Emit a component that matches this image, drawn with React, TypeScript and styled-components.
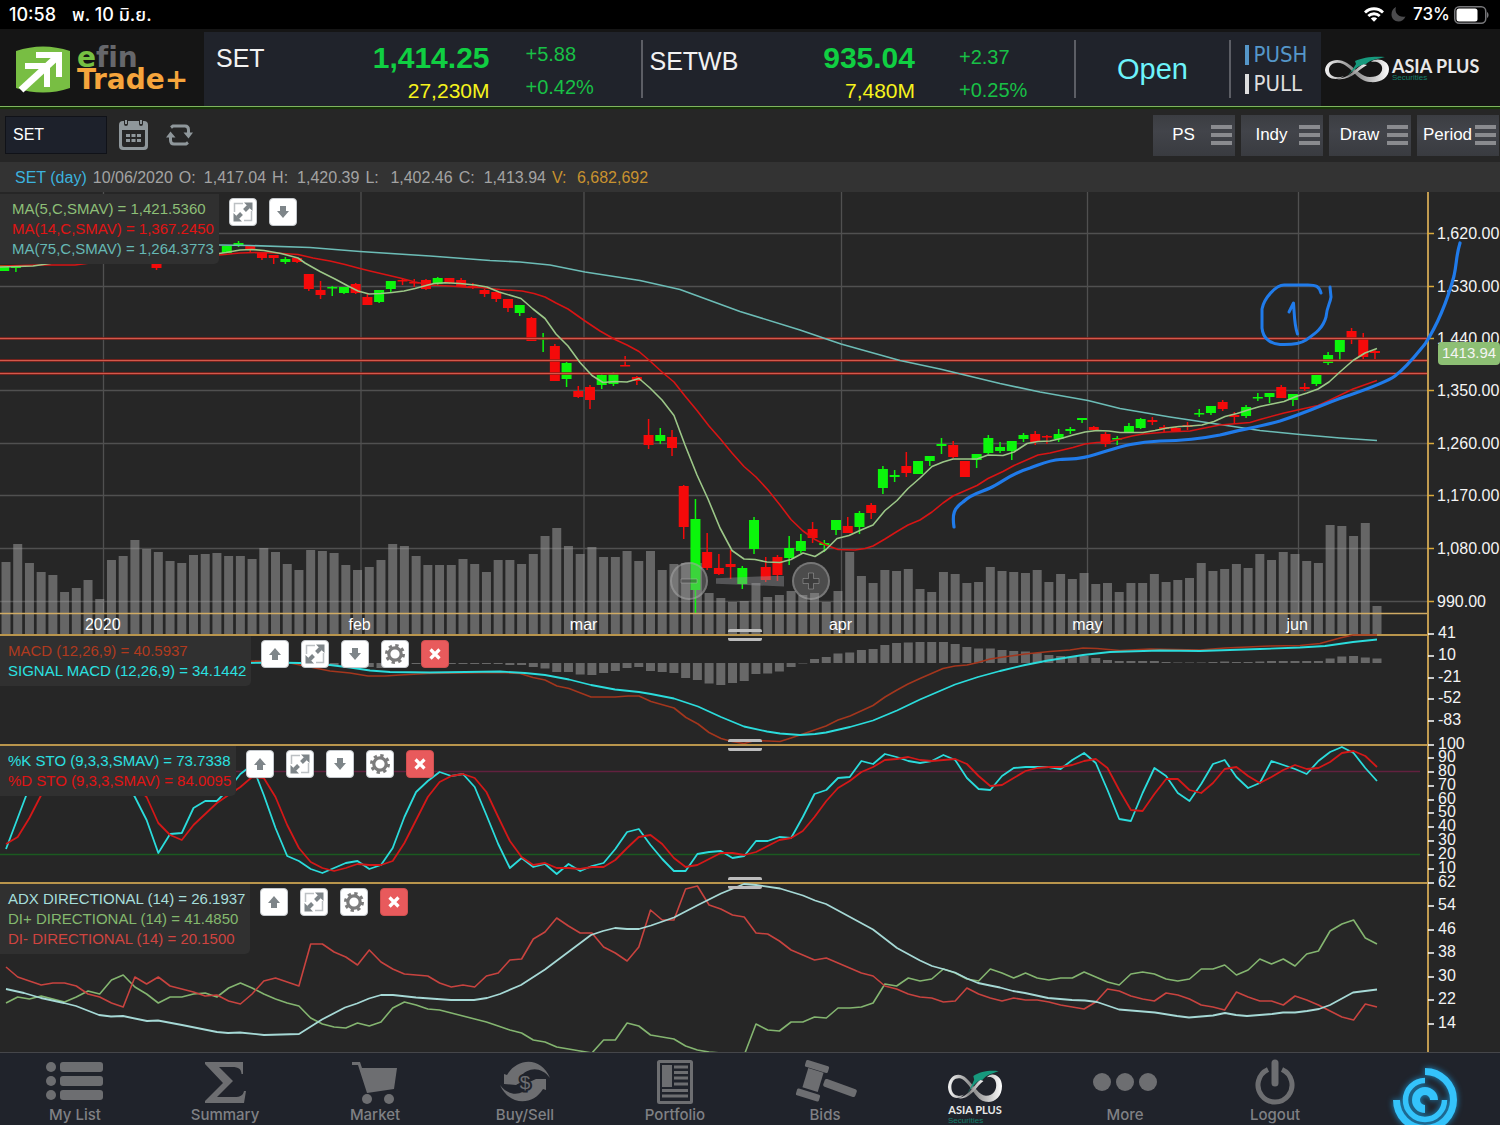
import React from "react";
import styled, { createGlobalStyle } from "styled-components";

const sans = `"Liberation Sans", Arial, sans-serif`;
const ui = `Inter, "Noto Sans Thai", "Noto Sans", sans-serif`;

const Global = createGlobalStyle`
  * { box-sizing: border-box; }
  body { margin: 0; background: #262626; font-family: ${sans}; color: #fff; }
  button { font: inherit; color: inherit; border: 0; padding: 0; background: none; cursor: pointer; }
`;

/* ---------- data ---------- */

const STEP = 11.718;
const nums = (s: string) => s.trim().split(/\s+/).map(Number);
const barX = (i: number) => 6 + i * STEP;
const candleX = (i: number) => 4.2 + i * 11.716;
const series = (s: string) => nums(s).map((y, i) => `${barX(i).toFixed(1)},${y}`).join(" ");

const volume = nums(`
562 544 563 572 575 592 588 580 599 560 556 540 549 552 561 563 555 554 553 556 556 559 548 552 564 570 550 551 553 565
570 567 560 544 546 556 565 565 565 559 564 572 560 560 564 554 536 528 546 554 547 557 557 551 561 551 570 564 563 563
593 598 602 601 583 597 595 591 595 593 602 591 552 576 583 570 571 569 589 592 572 574 583 582 567 571 572 573 570 582
574 579 573 584 583 592 583 583 574 582 580 578 563 571 569 564 568 554 560 552 554 561 563 525 526 536 523 606`);

/* index, direction, body top, body bottom, high, low */
const candles = `
0 g 265 271 265 271;1 g 266 268 266 272;13 r 264 268 264 270;19 g 246 253 246 253;20 g 243 245 241 247;21 r 245 249 245 252;
22 r 252 258 252 260;23 r 255 258 255 264;24 g 259 262 257 264;25 r 258 262 258 263;26 r 274 289 274 291;27 r 290 295 281 299;
28 g 287 288 286 296;29 g 287 293 287 294;30 r 284 293 283 294;31 r 297 305 294 305;32 g 290 302 290 303;33 g 281 289 281 293;
34 r 280 281 278 285;35 r 282 283 279 287;36 r 280 289 279 290;37 g 278 284 277 286;38 r 278 283 278 284;39 r 280 287 278 287;
40 r 286 287 283 289;41 r 290 294 289 297;42 r 292 299 292 302;43 r 299 308 299 312;44 g 305 313 305 316;45 r 318 341 317 341;
46 g 338 339 333 352;47 r 346 381 344 381;48 g 363 379 362 387;49 r 391 397 386 398;50 r 387 400 385 409;51 g 375 385 373 389;
52 g 374 384 372 386;53 r 365 366 356 366;54 r 377 381 376 385;55 r 435 445 419 449;56 g 435 441 428 444;57 r 437 448 430 456;
58 r 486 527 485 539;59 g 519 590 499 613;60 r 552 568 533 570;61 r 568 574 554 575;62 r 564 567 550 579;63 g 568 584 566 589;
64 g 520 549 517 554;65 r 567 580 557 582;66 r 557 575 555 581;67 g 548 558 536 565;68 g 541 551 534 553;69 r 529 538 522 543;
70 g 543 545 540 552;71 g 520 530 520 535;72 r 526 533 517 533;73 g 513 527 511 534;74 r 505 513 503 519;75 g 469 488 466 494;
76 g 475 477 470 482;77 r 466 473 452 477;78 g 461 474 461 474;79 g 456 461 456 466;80 g 444 446 438 454;81 r 445 457 441 458;
82 r 461 477 461 477;83 g 454 460 454 468;84 g 438 453 435 454;85 g 447 451 442 453;86 g 441 451 441 460;87 g 435 439 433 442;
88 r 434 442 431 445;89 r 436 437 435 444;90 g 434 439 429 442;91 g 429 431 427 434;92 g 418 420 418 423;93 r 427 430 426 431;
94 r 434 444 432 447;95 g 438 439 436 445;96 g 426 432 423 433;97 g 419 428 418 429;98 r 420 422 417 425;99 r 427 429 425 432;
100 r 428 431 427 432;101 r 425 427 422 430;102 g 413 414 409 417;103 g 406 413 406 415;104 r 402 409 400 411;105 r 415 417 412 424;
106 g 407 416 405 418;107 g 397 398 393 401;108 g 393 397 393 403;109 r 387 398 385 398;110 g 394 400 394 406;111 r 387 389 383 391;
112 g 375 384 375 386;113 g 355 363 352 365;114 g 340 352 340 360;115 r 331 339 328 344;116 r 339 357 333 359;117 r 351 353 350 359`
  .trim()
  .split(";")
  .map((row) => {
    const [i, dir, ...v] = row.trim().split(" ");
    const [top, bottom, high, low] = v.map(Number);
    return { i: Number(i), dir, top, bottom, high, low };
  });

const ma5 =
  "0,267 33,266 60,262 120,259 180,258 219,253.5 226,252.5 240,250 252,249.5 264,250.5 281,253.5 298,258 305,263 320,271.5 335,279 348,286 358,291 369,294 381,293.5 392,292.5 404,291 415,288.5 428,285 434,283.5 445,282.7 460,283.5 475,285 487,287 499,292 521,298.5 533,309 545,318.5 556,334 568,346 580,362.5 592,375.5 603,382.5 615,381.5 627,382 639,378.5 650,388 662,400 674,415.5 685,445 697,475 708,499 720,528 732,550.5 744,559 755,559.5 767,562 780,562.5 791,559.5 803,553 815,556.5 826,549.5 837,538.5 849,535.5 861,530 873,525 885,510.5 897,500.5 908,488.5 920,478 932,466.5 943,462 953,459 977,459 988,455 1003,455.5 1014,452 1027,443.5 1038,441.5 1050,441 1061,438.5 1073,435 1085,432 1097,430.5 1109,431 1120,432.5 1143,432.5 1155,430.5 1167,428 1179,426.5 1190,426 1202,425 1214,421.5 1225,416.5 1237,413.5 1248,410 1260,406.5 1272,404 1284,401.5 1296,396.5 1307,393 1318,389 1329,382 1341,371 1353,360.5 1365,353 1377,348.5";
const ma14 =
  "0,266 40,265 75,265 90,263 219,255 240,253 258,252.5 275,253 298,254.5 313,258 330,261 345,264.5 358,268 370,271 385,274.5 400,278 415,282 430,285 450,286 470,287.5 480,287.5 500,289.5 522,291 534,293.5 545,297 556,303 568,309 585,321 600,331 615,339.5 627,345 639,351.5 650,361 662,372 674,382 685,396 697,410.5 709,426 720,438.5 732,453 744,466.5 756,477 768,490 780,505 791,519.5 803,531 815,539.5 826,545 838,549.5 855,550 865,548.5 873,546 885,539 897,531.5 908,525 920,520 932,512 943,503 953,496 977,485.5 988,478.5 1003,471.5 1014,465.5 1038,455 1050,453 1073,447.5 1085,444 1097,442.5 1109,442 1120,439 1132,436 1143,434 1167,432 1190,431 1202,428.5 1220,425 1250,422.5 1260,419.5 1284,413 1318,405.5 1329,400.5 1353,389 1377,380.5";
const ma75 =
  "180,244 219,245 250,245.5 310,247.5 360,251.5 430,256 490,260.5 520,262 550,265 585,272 640,280.5 680,289.5 740,311.5 800,330 841,344 900,360.5 940,369 1000,383.5 1040,392 1088,400.5 1120,408.5 1170,417 1220,424.5 1260,430.5 1300,434.5 1340,438 1377,440.5";

const histogram = nums(`
665 666 668 667 668 666 665 664 664 664 664 664 664 664 664 665 665 667 668.5 672 672 674.5 675 673 671 668 667 671 672 673
678 680 683.5 685 683 681 674 673.5 671.5 667 663.5 659 657 653.5 652.5 650 649 645 643 642.5 642 642 642 644 647 648.5
648.5 650 651 651.5 653 655 656 657 656 658 660 661 661 661 661 662 662.5 662.5 662.5 662 661.5 662 662 661.5 661 661 661
661 661 658.5 656.5 656 657.5 658.5`);
const HIST_START = 28;
const HIST_ZERO = 663;

const macdLine =
  "200,659 246,661 270,661.5 290,663 310,667 330,671 350,673 368,676 385,676 400,675 428,673.5 500,672.5 520,673.5 533,677.5 545,680 557,686 569,688.5 591,697 615,697 628,696 639,696 651,701.5 674,708 686,717.5 698,724 709,732.5 721,738.5 732,741.5 744,743.5 755,740.5 780,741.5 791,738 803,734 826,726 838,720 850,716 873,705.5 885,697 897,690 908,684 920,678.5 943,668.5 955,666 967,665 978,662.5 990,659 1000,657.5 1025,654 1050,651.5 1070,650 1083,648 1097,648.5 1120,650.5 1150,649 1200,650 1225,648 1270,646 1300,645.5 1320,643.5 1340,638 1353,635 1377,635";
const signalLine =
  "200,663 246,663 270,662.5 300,663 330,665 350,667.5 370,670.5 390,672 430,672.5 500,671.5 525,673 545,675 569,679.5 591,685 615,689.5 639,692 651,694 674,698.5 698,706.5 721,717 744,726.5 767,731.5 780,733.5 800,735 815,734 826,732.5 850,727 873,720.5 897,710.5 920,699.5 955,684.5 978,677 1000,671 1025,665 1048,660.5 1083,655 1110,652 1160,650.5 1200,651 1260,649 1300,647.5 1325,646 1353,642 1377,639.5";

const stoK = series(`
849 818 787 780 765 758 755 757 762 770 778 797 820 853 834 833 808 801 801 789 774 765 795 828 856 861 869 873 868 863
861 869 865 848 817 792 781 772 776 774 787 815 844 868 858 867 864 874 864 871 866 863 849 832 829 845 859 871 871 854
852 851 858 856 841 841 837 838 817 794 790 778 777 761 764 754 757 761 763 761 755 760 778 789 790 776 768 767 767 767
769 760 753 763 790 819 821 793 768 776 793 801 784 764 760 777 788 783 761 765 769 774 761 752 747 753 768 781`);
const stoD = series(`
844 837 818 795 780 768 762 760 762 768 775 785 797 823 835 840 825 814 803 795 787 777 778 797 825 848 862 868 871 868
864 865 865 861 843 820 797 782 776 774 778 792 817 841 857 865 863 868 868 869 867 867 860 848 837 835 844 858 867 865
859 853 853 855 852 846 840 838 831 817 801 788 781 772 767 760 759 757 760 761 760 759 764 776 786 785 778 771 768 767
767 765 761 759 768 790 810 811 794 779 779 790 793 783 769 767 776 783 777 770 765 769 768 762 753 751 756 767`);

const adx =
  "6,989 24,993 41,998 64,1003 76,1006 99,1015 111,1016.5 123,1016 147,1021 158,1020.5 182,1025 217,1032 228,1033 240,1032.5 264,1035 299,1034 322,1019.5 345,1007.5 357,1003.5 369,998.5 381,995 393,995 416,997.5 451,1000 474,1000 487,998 500,994 521,985 545,969.5 569,951.5 591,935 603,931 615,928 627,929 639,929 651,925.5 674,917.5 698,905 721,893.5 744,884 756,885 780,888.5 803,895.5 815,900.5 826,904 850,917 873,929.5 897,948 920,960.5 932,966 943,969 955,972.5 967,978.5 978,983 990,985.5 1000,987.5 1013,991 1025,993 1048,998 1072,1000 1085,1000.5 1097,1002 1119,1009.5 1155,1012.5 1177,1016 1189,1017.5 1213,1015.5 1225,1013 1236,1015 1247,1016 1272,1014 1283,1012.5 1295,1012.5 1307,1011 1319,1009 1330,1005 1353,992.5 1377,989.5";
const diPlus = series(`
1003 997 999 996 999 1002 997 991 994 980 975 987 994 1003 997 997 994 993 997 988 983 988 994 999 1003 1006 1018 1024 1027 1028
1023 1026 1022 1008 1002 1005 1009 1010 1013 1016 1019 1022 1026 1030 1033 1040 1042 1047 1049 1051 1053 1040 1040 1023 1026 1035 1037 1039 1046 1050
1052 1053 1053 1055 1024 1030 1031 1022 1022 1017 1018 1008 1008 1007 1003 984 986 978 981 979 969 973 979 981 969 973 978 973 978 980
978 978 972 977 982 985 974 972 974 979 981 979 969 969 965 975 970 959 964 959 966 954 951 931 924 920 938 944`);
const diMinus = series(`
967 977 981 985 983 983 986 994 997 1003 1007 977 984 977 986 989 992 996 995 1001 1004 994 981 978 982 986 944 944 952 957
965 950 962 969 974 975 976 983 987 985 987 976 973 960 959 939 932 918 926 933 933 947 953 961 947 910 920 920 889 886
905 909 915 917 933 934 941 950 955 960 958 963 968 973 976 986 989 994 997 998 1002 1001 988 994 998 1001 998 1000 1000 1002
1005 1007 1009 1002 989 991 996 999 1001 993 995 999 1005 1007 1010 992 997 1001 1001 1005 996 1000 1005 1011 1017 1020 1004 1007`);

const priceTicks: [number, string][] = [
  [234, "1,620.00"], [287, "1,530.00"], [339, "1,440.00"], [391, "1,350.00"],
  [444, "1,260.00"], [496, "1,170.00"], [549, "1,080.00"], [602, "990.00"],
];
const lowerTicks: [number, string][] = [
  [634, "41"], [656, "10"], [678, "-21"], [699, "-52"], [721, "-83"],
  [745, "100"], [758, "90"], [772, "80"], [786, "70"], [800, "60"], [813, "50"], [827, "40"], [841, "30"], [855, "20"], [869, "10"],
  [883, "62"], [906, "54"], [930, "46"], [953, "38"], [977, "30"], [1000, "22"], [1024, "14"],
];
const months: [number, string][] = [
  [7.2, "2020"], [25.2, "feb"], [40.9, "mar"], [58.9, "apr"], [76.2, "may"], [90.9, "jun"],
];
const monthLines = [103.5, 361, 584, 841.5, 1087.5, 1298.5];

/* ---------- status bar and header ---------- */

const StatusBar = styled.div`
  display: flex;
  justify-content: space-between;
  align-items: center;
  height: 29px;
  padding: 0 11px 0 9px;
  background: #000;
  font: 500 17px/29px ${ui};
`;
const StatusGroup = styled.div<{ $gap: number }>`
  display: flex;
  align-items: center;
  gap: ${(p) => p.$gap}px;
`;
const Clock = styled(StatusGroup)`font-size: 18px;`;
const Header = styled.header`
  display: flex;
  height: 80px;
  padding-top: 3px;
  background: #151515;
  border-bottom: 2px solid #163407;
  box-shadow: inset 0 -1px #7fb55f;
`;
const Brand = styled.div`
  display: flex;
  align-items: center;
  gap: 7px;
  width: 204px;
  padding-left: 16px;
`;
const BrandText = styled.div`
  font: bold 28px/22px "DejaVu Sans", sans-serif;
  font-variant-ligatures: none;
  color: #66676b;
  padding-bottom: 2px;
`;
const BrandE = styled.span`color: #76c043;`;
const BrandTrade = styled.div`color: #f6a53c;`;
const Market = styled.div`
  display: flex;
  flex: 1;
  height: 74px;
  padding: 8px 0;
  background: #20232b;
`;
const Quote = styled.section<{ $left: number }>`
  display: flex;
  flex: 1;
  padding-left: ${(p) => p.$left}px;
`;
const QuoteName = styled.h2<{ $drop: number }>`
  flex: 1;
  margin: 0;
  padding-top: ${(p) => p.$drop}px;
  font: 25px/36px ${sans};
  color: #f2f2f2;
`;
const QuoteValue = styled.div`
  text-align: right;
  font: bold 30px/36px ${sans};
  color: #10cf42;
`;
const Turnover = styled.div`
  font: 21px/30px ${sans};
  color: #f6f31c;
`;
const Change = styled.div<{ $indent: number; $drop: number }>`
  width: ${(p) => 115 + p.$indent}px;
  margin-top: -2px;
  padding: ${(p) => p.$drop}px 0 0 ${(p) => p.$indent}px;
  font: 20px/33px ${sans};
  color: #18c046;
`;
const Cell = styled.div<{ $w: number }>`
  display: flex;
  align-items: center;
  justify-content: center;
  width: ${(p) => p.$w}px;
  border-left: 2px solid #5c5e65;
`;
const Divider = styled.div`width: 2px; background: #5c5e65;`;
const OpenState = styled.span`font-size: 29px; color: #6df3fb;`;
const Modes = styled.div`display: grid; gap: 9px;`;
const Mode = styled.button<{ $color: string }>`
  padding-left: 5px;
  border-left: 4px solid ${(p) => p.$color};
  color: ${(p) => p.$color};
  font: 22px/20px "DejaVu Sans Condensed", "DejaVu Sans", sans-serif;
  font-stretch: condensed;
  text-align: left;
  height: 20px;
`;
const Sponsor = styled.div`
  display: flex;
  align-items: center;
  gap: 3px;
  width: 179px;
  padding-left: 4px;
`;
const SponsorText = styled.div<{ $small?: boolean }>`
  font: bold ${(p) => (p.$small ? 11 : 18)}px/${(p) => (p.$small ? 14 : 16)}px Lato, sans-serif;
  color: #e8e8e8;
  white-space: nowrap;
`;
const Securities = styled.div`
  font: 8px/8px ${sans};
  color: #13806b;
  text-align: left;
`;

/* ---------- toolbar ---------- */

const Toolbar = styled.div`
  display: flex;
  align-items: center;
  height: 53px;
  padding: 0 1px 1px 5px;
  background: #262626;
`;
const SymbolInput = styled.input`
  width: 102px;
  height: 38px;
  padding: 0 7px;
  border: 1px solid #101218;
  border-radius: 0;
  background: #1d212b;
  color: #fff;
  font: 16px ${sans};
`;
const IconButton = styled.button<{ $ml: number }>`
  display: flex;
  margin-left: ${(p) => p.$ml}px;
`;
const Menus = styled.div`
  display: flex;
  gap: 6px;
  margin-left: auto;
`;
const MenuButton = styled.button`
  display: flex;
  align-items: center;
  width: 82px;
  height: 41px;
  padding: 0 3px;
  background: linear-gradient(#3b3d42, #42444a 40%, #393b40);
  font: 17px/20px ${sans};
`;
const MenuLabel = styled.span`flex: 1; text-align: center;`;
const MenuLines = styled.span`
  width: 21px;
  height: 20px;
  background: repeating-linear-gradient(#8a8b8f 0 4px, transparent 4px 8px);
`;
const InfoRow = styled.div`
  display: flex;
  align-items: center;
  gap: 6px;
  height: 30px;
  padding: 2px 15px 0;
  background: #333;
  font: 16px/28px ${sans};
  color: #a3a3a3;
`;
const InfoSymbol = styled.span`color: #3cb2de;`;
const InfoPair = styled.span<{ $gold?: boolean }>`
  display: flex;
  color: ${(p) => (p.$gold ? "#c8922f" : "inherit")};
`;
const InfoKey = styled.span`width: 25px;`;

/* ---------- chart ---------- */

const Chart = styled.main`
  position: relative;
  display: grid;
  grid-template-columns: minmax(0, 1fr) 73px;
  background: #262626;
`;
const Panel = styled.section<{ $h: number }>`
  position: relative;
  height: ${(p) => p.$h}px;
`;
const Plot = styled.svg<{ $clip?: boolean }>`
  display: block;
  width: 100%;
  height: 100%;
  overflow: ${(p) => (p.$clip ? "hidden" : "visible")};
`;
const PanelHead = styled.div`
  position: absolute;
  z-index: 2;
  top: 2px;
  left: 0;
  display: flex;
  gap: 10px;
`;
const Legend = styled.div<{ $left: number }>`
  padding: 5px 5px 5px ${(p) => p.$left}px;
  border-radius: 0 0 5px 0;
  background: #303030;
  font: 15px/20px ${sans};
  white-space: nowrap;
`;
const LegendRow = styled.div<{ $color: string }>`color: ${(p) => p.$color};`;
const PanelButtons = styled.div`display: flex; gap: 12px; padding-top: 4px;`;
const PanelButton = styled.button<{ $danger?: boolean }>`
  width: 28px;
  height: 28px;
  border: 1px solid ${(p) => (p.$danger ? "#d05050" : "#c4c8cc")};
  border-radius: 4px;
  background: ${(p) => (p.$danger ? "#e85a5c" : "#fff")};
`;
const Grip = styled.div`
  position: absolute;
  z-index: 1;
  top: -5px;
  left: 51%;
  width: 34px;
  height: 12px;
  border: solid #bdbdbd;
  border-width: 3px 0;
  border-radius: 2px;
`;
const Month = styled.span`
  position: absolute;
  bottom: 0;
  transform: translateX(-50%);
  font: 16px/19px ${sans};
`;
const Axis = styled.svg`display: block;`;
const Markup = styled.svg`
  position: absolute;
  z-index: 3;
  top: 0;
  left: 0;
  width: 100%;
  height: 442px;
  pointer-events: none;
`;
const ZoomControl = styled.div`
  position: absolute;
  z-index: 2;
  top: 370px;
  left: 50%;
  display: flex;
  align-items: center;
  gap: 8px;
  transform: translateX(-50%);
`;
const ZoomButton = styled.button`
  width: 38px;
  height: 38px;
  border: 2px solid rgba(170, 170, 170, 0.45);
  border-radius: 50%;
  background: rgba(150, 150, 150, 0.35);
`;
const ZoomRange = styled.input`
  appearance: none;
  width: 68px;
  height: 11px;
  margin: 0;
  background: rgba(150, 150, 155, 0.42);
  clip-path: polygon(0 25%, 100% 0, 100% 100%, 0 75%);
  &::-webkit-slider-thumb { appearance: none; width: 2px; height: 11px; background: transparent; }
`;

/* ---------- bottom navigation ---------- */

const Nav = styled.nav`
  display: grid;
  grid-template-columns: repeat(10, minmax(0, 1fr));
  height: 73px;
  overflow: hidden;
  border-top: 1px solid #45464a;
  background: #20232b;
`;
const NavItem = styled.button`
  display: flex;
  flex-direction: column;
  align-items: center;
  padding-top: 6px;
  font: 500 15px/20px ${ui};
  color: #7f8084;
`;
const NavIcon = styled.svg`display: block; flex: none; width: 64px; height: 46px;`;
const Assist = styled.svg`
  display: block;
  flex: none;
  width: 76px;
  height: 76px;
  margin-top: 4px;
  overflow: visible;
  filter: drop-shadow(0 0 3px #1c8ec8);
`;
const NavSponsor = styled.span`
  display: flex;
  flex-direction: column;
  padding-top: 11px;
`;

/* ---------- pieces ---------- */

const Infinity8 = ({ w, h, id }: { w: number; h: number; id: string }) => (
  <svg width={w} height={h} viewBox="0 0 64 27" preserveAspectRatio="none" fill="none" aria-hidden="true">
    <defs>
      <linearGradient id={id} x1="0" x2="1">
        <stop offset="0" stopColor="#f4f4f4" />
        <stop offset=".45" stopColor="#858585" />
        <stop offset=".8" stopColor="#d0d0d0" />
        <stop offset="1" stopColor="#fff" />
      </linearGradient>
    </defs>
    <path fill={`url(#${id})`} fillRule="evenodd" d="M0 14C1 4 13 1 22 7C31 13 37 21 45 21C54 21 58 16 57 11C56 7 52 5 46 6C51 1 64 4 64 13C64 22 55 27 45 26C33 25 28 13 18 8C11 5 4 8 4 14C4 20 11 23 19 20C13 25 1 24 0 14Z" />
    <path fill={`url(#${id})`} d="M12 23C24 22 30 13 38 8L42 9C34 13 26 25 12 23Z" />
    <path fill="#17997d" d="M23 19C27 15 29 11 31 8L30 5C38 1 50 0 60 1C52 3 45 4 41 8C35 8 30 13 23 19Z" />
  </svg>
);

type Glyph = "up" | "expand" | "down" | "gear" | "close";
const glyphNames: Record<Glyph, string> = {
  up: "Move panel up", expand: "Expand panel", down: "Move panel down", gear: "Panel settings", close: "Close panel",
};
const glyphs: Record<Glyph, React.ReactNode> = {
  up: <path fill="#7e8589" d="M13 7l6 7h-3v5h-6v-5H7z" />,
  down: <path fill="#7e8589" d="M13 19l6-7h-3V7h-6v5H7z" />,
  expand: (
    <g>
      <path fill="none" stroke="#bcc0c3" strokeWidth="1.500" d="M13 4.500H4.500V13M14 21.500h7.500V12" />
      <path stroke="#7e8589" strokeWidth="4" d="M7.500 18.500l4-4M14.500 11.500l4-4" />
      <path fill="#7e8589" d="M22.500 3.500v8.500L14 3.500zM3.500 22.500V14l8.500 8.500z" />
    </g>
  ),
  gear: (
    <g fill="none" stroke="#7c7c7c">
      <circle cx="13" cy="13" r="6.200" strokeWidth="3.200" />
      <circle cx="13" cy="13" r="8.500" strokeWidth="3" strokeDasharray="3.300 3.376" />
    </g>
  ),
  close: <path stroke="#fff" strokeWidth="3.200" d="M8.500 8.500l9 9M17.500 8.500l-9 9" />,
};

const Head = ({ rows, left = 8, tools }: { rows: [string, string][]; left?: number; tools: Glyph[] }) => (
  <PanelHead>
    <Legend $left={left}>
      {rows.map(([color, text]) => (
        <LegendRow key={text} $color={color}>{text}</LegendRow>
      ))}
    </Legend>
    <PanelButtons>
      {tools.map((t) => (
        <PanelButton key={t} $danger={t === "close"} aria-label={glyphNames[t]}>
          <svg width="26" height="26" viewBox="0 0 26 26" aria-hidden="true" display="block">{glyphs[t]}</svg>
        </PanelButton>
      ))}
    </PanelButtons>
  </PanelHead>
);

const Line = ({ points, color, width = 1.6 }: { points: string; color: string; width?: number }) => (
  <polyline points={points} fill="none" stroke={color} strokeWidth={width} strokeLinejoin="round" />
);
const Separator = ({ y }: { y: number }) => <path d={`M0 ${y}H1427`} stroke="#b9954c" strokeWidth="2" />;

const navIcons: [string, React.ReactNode][] = [
  ["My List", (
    <g key="l">
      {[8, 22, 36].map((y) => (
        <g key={y}>
          <circle cx="8" cy={y} r="5" />
          <rect x="17" y={y - 5} width="43" height="10" rx="3" />
        </g>
      ))}
    </g>
  )],
  ["Summary", <path key="s" d="M12 3H50V15H48.500C48 10 46 8 39 8H26L40 22L24 38H41C48 38 50 36 51 32H53L51 44H12V42L30 24L12 5Z" />],
  ["Market", (
    <g key="m">
      <path d="M9 3h8l2 6h35l-3 21-27 4L15 6H9z" />
      <circle cx="24" cy="40" r="5" />
      <circle cx="46" cy="40" r="5" />
    </g>
  )],
  ["Buy/Sell", (
    <g key="b">
      <path d="M11 25V15l3 1C24-1 48-3 57 19C48 7 35 8 27 18l5 3-9 5z" />
      <path d="M53 20v11l-3-1C40 47 16 47 7 26c9 12 22 11 30 1l-5-2 11-5z" />
      <text x="32" y="30" fontSize="19" fontFamily="Liberation Sans, sans-serif" textAnchor="middle" stroke="#20232b" strokeWidth="4" paintOrder="stroke">$</text>
    </g>
  )],
  ["Portfolio", (
    <g key="p">
      <rect x="15.500" y="2.500" width="33" height="41" rx="1" fill="none" stroke="#6d6e71" strokeWidth="3" />
      <rect x="19" y="6" width="10" height="22" />
      <path d="M31 8h14M31 13.500h14M31 19h14M31 25h14M19 31.500h26M19 37h26" stroke="#6d6e71" strokeWidth="3" />
    </g>
  )],
  ["Bids", (
    <g key="g">
      <rect x="-12" y="-3.500" width="24" height="7" rx="1.500" transform="translate(24 7.500) rotate(17)" />
      <rect x="-8" y="-10" width="16" height="20" transform="translate(20 21) rotate(17)" />
      <rect x="-12" y="-3.500" width="24" height="7" rx="1.500" transform="translate(15 36) rotate(17)" />
      <rect x="-17" y="-4" width="34" height="8" rx="2" transform="translate(47 29) rotate(20)" />
    </g>
  )],
  ["ASIA PLUS", null],
  ["More", (
    <g key="o">
      <circle cx="9" cy="23" r="9" />
      <circle cx="32" cy="23" r="9" />
      <circle cx="55" cy="23" r="9" />
    </g>
  )],
  ["Logout", (
    <g key="q" fill="none" stroke="#6d6e71">
      <path strokeWidth="5" d="M25 10.500A17 17 0 1 0 39 10.500" />
      <path strokeWidth="7" strokeLinecap="round" d="M32 4V24" />
    </g>
  )],
];

export default function App() {
  return (
    <>
      <Global />
      <StatusBar>
        <Clock $gap={16}>
          <span>10:58</span>
          <span>พ. 10 มิ.ย.</span>
        </Clock>
        <StatusGroup $gap={7}>
          <svg width="20" height="15" viewBox="0 0 20 15" fill="none" stroke="#fff" strokeWidth="2.800" aria-label="Wi-Fi">
            <path d="M1 5.500C6 .5 14 .5 19 5.500" />
            <path d="M4.300 9C7.500 6 12.500 6 15.700 9" />
            <path d="M10 14.800L6.800 11.500C8.500 9.900 11.500 9.900 13.200 11.500Z" fill="#fff" stroke="none" />
          </svg>
          <svg width="15" height="15" viewBox="0 0 15 15" fill="#4b4b4d" aria-label="Do not disturb">
            <path d="M5 0C3 6 8 11 14.500 9.500C13 13 10.500 14.500 7.500 14.500C3.500 14.500 .5 11.500 .5 7.500C.5 4 2 1.500 5 0Z" />
          </svg>
          <StatusGroup $gap={4}>
            <span>73%</span>
            <svg width="35" height="18" viewBox="0 0 35 18" aria-label="Battery">
              <rect x=".75" y=".75" width="31" height="16.500" rx="4.500" fill="none" stroke="#77777a" strokeWidth="1.500" />
              <rect x="2.500" y="2.500" width="21" height="13" rx="2.500" fill="#fff" />
              <path d="M33 6v6c2-1 2-5 0-6z" fill="#77777a" />
            </svg>
          </StatusGroup>
        </StatusGroup>
      </StatusBar>

      <Header>
        <Brand>
          <svg width="54" height="48" viewBox="0 0 54 48" aria-hidden="true">
            <path fill="#78be43" d="M0 5Q27-4 54 5V42Q27 51 0 42Z" />
            <g fill="none" stroke="#fff">
              <path strokeWidth="6" d="M20 9H43V31M9 20H31V41" />
              <path strokeWidth="7" d="M42 10L5 44" />
            </g>
          </svg>
          <BrandText>
            <BrandE>e</BrandE>fin
            <BrandTrade>Trade+</BrandTrade>
          </BrandText>
        </Brand>
        <Market>
          <Quote $left={12}>
            <QuoteName $drop={0}>SET</QuoteName>
            <QuoteValue>1,414.25<Turnover>27,230M</Turnover></QuoteValue>
            <Change $indent={36} $drop={0}>+5.88<br />+0.42%</Change>
          </Quote>
          <Divider />
          <Quote $left={7}>
            <QuoteName $drop={3}>SETWB</QuoteName>
            <QuoteValue>935.04<Turnover>7,480M</Turnover></QuoteValue>
            <Change $indent={44} $drop={3}>+2.37<br />+0.25%</Change>
          </Quote>
          <Cell $w={155}><OpenState>Open</OpenState></Cell>
          <Cell $w={92}>
            <Modes>
              <Mode $color="#5597c9">PUSH</Mode>
              <Mode $color="#dedede">PULL</Mode>
            </Modes>
          </Cell>
        </Market>
        <Sponsor>
          <Infinity8 w={64} h={27} id="ring-top" />
          <div>
            <SponsorText>ASIA PLUS</SponsorText>
            <Securities>Securities</Securities>
          </div>
        </Sponsor>
      </Header>

      <Toolbar>
        <SymbolInput aria-label="Symbol" defaultValue="SET" />
        <IconButton $ml={12} aria-label="Calendar">
          <svg width="29" height="30" viewBox="0 0 29 30" fill="#8f979b">
            <path fillRule="evenodd" d="M4 1H5V4a2 2 0 0 0 4 0V1H20V4a2 2 0 0 0 4 0V1H25A4 4 0 0 1 29 5V26A4 4 0 0 1 25 30H4A4 4 0 0 1 0 26V5A4 4 0 0 1 4 1ZM3 10V25A2 2 0 0 0 5 27H24A2 2 0 0 0 26 25V10Z" />
            <path d="M6 0h2v4h-2zM21 0h2v4h-2zM7 14h4v3H7zM12.500 14h4v3h-4zM18 14h4v3h-4zM7 19h4v3H7zM12.500 19h4v3h-4zM18 19h4v3h-4z" />
          </svg>
        </IconButton>
        <IconButton $ml={18} aria-label="Refresh">
          <svg width="27" height="22" viewBox="0 0 27 22" fill="none" stroke="#8f979b" strokeWidth="3">
            <path d="M5 3.500L7 2H19Q22.500 2 22.500 6V9M22 18.500L20 20H8Q4.500 20 4.500 16V13" />
            <path fill="#8f979b" stroke="none" d="M17.500 8.500H27L22.500 14.500ZM0 13.500H9.500L4.500 7.500Z" />
          </svg>
        </IconButton>
        <Menus>
          {["PS", "Indy", "Draw", "Period"].map((m) => (
            <MenuButton key={m}><MenuLabel>{m}</MenuLabel><MenuLines /></MenuButton>
          ))}
        </Menus>
      </Toolbar>

      <InfoRow>
        <InfoSymbol>SET (day)</InfoSymbol>
        <span>10/06/2020</span>
        <InfoPair><InfoKey>O:</InfoKey>1,417.04</InfoPair>
        <InfoPair><InfoKey>H:</InfoKey>1,420.39</InfoPair>
        <InfoPair><InfoKey>L:</InfoKey>1,402.46</InfoPair>
        <InfoPair><InfoKey>C:</InfoKey>1,413.94</InfoPair>
        <InfoPair $gold><InfoKey>V:</InfoKey>6,682,692</InfoPair>
      </InfoRow>

      <Chart>
        <div>
          <Panel $h={442}>
            <Plot viewBox="0 192 1427 442" preserveAspectRatio="none">
              <g stroke="#505050" strokeWidth="1.300">
                {priceTicks.map(([y]) => <path key={y} d={`M0 ${y - 0.5}H1427`} />)}
                {monthLines.map((x) => <path key={x} d={`M${x} 192V613`} />)}
              </g>
              {volume.map((y, i) => (
                <rect key={i} x={barX(i) - 4.5} y={y} width="9" height={634 - y} fill="rgba(165,165,165,.5)" />
              ))}
              {candles.map((c) => {
                const x = candleX(c.i);
                const color = c.dir === "g" ? "#0bf60b" : "#f50a0a";
                return (
                  <g key={c.i} fill={color}>
                    <rect x={x - 0.75} y={c.high} width="1.500" height={c.low - c.high} />
                    <rect x={x - 5} y={c.top} width="10" height={Math.max(c.bottom - c.top, 1.5)} />
                  </g>
                );
              })}
              {[338.5, 360.5, 373.5].map((y) => (
                <g key={y}>
                  <path d={`M0 ${y}H1427`} stroke="#8f231b" strokeWidth="2.600" />
                  <path d={`M0 ${y}H1427`} stroke="#d2594c" strokeWidth="1" />
                </g>
              ))}
              <Line points={ma75} color="#6cbcb6" />
              <Line points={ma14} color="#d81414" />
              <Line points={ma5} color="#9cc788" />
              <path d="M0 613.500H1427" stroke="#d0ab64" strokeWidth="1.600" />
            </Plot>
            <Head
              left={12}
              tools={["expand", "down"]}
              rows={[
                ["#8dbf77", "MA(5,C,SMAV) = 1,421.5360"],
                ["#e01414", "MA(14,C,SMAV) = 1,367.2450"],
                ["#66b8b5", "MA(75,C,SMAV) = 1,264.3773"],
              ]}
            />
            {months.map(([left, label]) => (
              <Month key={label} style={{ left: `${left}%` }}>{label}</Month>
            ))}
          </Panel>

          <Panel $h={110}>
            <Plot viewBox="0 634 1427 110" preserveAspectRatio="none">
              <Separator y={635} />
              {histogram.map((y, k) => (
                <rect
                  key={k}
                  x={barX(k + HIST_START) - 4.5}
                  y={Math.min(y, HIST_ZERO)}
                  width="9"
                  height={Math.abs(y - HIST_ZERO)}
                  fill="#686868"
                />
              ))}
              <Line points={macdLine} color="#a4361d" />
              <Line points={signalLine} color="#2bdcdc" width={1.8} />
            </Plot>
            <Grip />
            <Head
              tools={["up", "expand", "down", "gear", "close"]}
              rows={[["#b03a1e", "MACD (12,26,9) = 40.5937"], ["#2be0e0", "SIGNAL MACD (12,26,9) = 34.1442"]]}
            />
          </Panel>

          <Panel $h={138}>
            <Plot viewBox="0 744 1427 138" preserveAspectRatio="none">
              <Separator y={745} />
              <path d="M0 771.500H1420" stroke="#62213f" strokeWidth="1.300" />
              <path d="M0 854.500H1420" stroke="#1b5a20" strokeWidth="1.300" />
              <Line points={stoK} color="#2bdcdc" width={1.8} />
              <Line points={stoD} color="#d41818" width={1.8} />
            </Plot>
            <Grip />
            <Head
              tools={["up", "expand", "down", "gear", "close"]}
              rows={[["#2be0e0", "%K STO (9,3,3,SMAV) = 73.7338"], ["#e01414", "%D STO (9,3,3,SMAV) = 84.0095"]]}
            />
          </Panel>

          <Panel $h={170}>
            <Plot $clip viewBox="0 882 1427 170" preserveAspectRatio="none">
              <Separator y={883} />
              <Line points={diPlus} color="#84b570" />
              <Line points={diMinus} color="#c8433f" />
              <Line points={adx} color="#a6d9d6" width={1.8} />
            </Plot>
            <Grip />
            <Head
              tools={["up", "expand", "gear", "close"]}
              rows={[
                ["#a6dedb", "ADX DIRECTIONAL (14) = 26.1937"],
                ["#84b86e", "DI+ DIRECTIONAL (14) = 41.4850"],
                ["#cf4440", "DI- DIRECTIONAL (14) = 20.1500"],
              ]}
            />
          </Panel>
        </div>

        <Axis width="73" height="860" viewBox="0 192 73 860" fontFamily="Liberation Sans, Arial, sans-serif" fontSize="16" fill="#f4f4f4">
          <path d="M1 192V1052" stroke="#c09b50" strokeWidth="2" />
          {priceTicks.map(([y, label]) => (
            <g key={label}>
              <path d={`M0 ${y - 0.5}H7`} stroke="#d9a93c" strokeWidth="1.500" />
              <text x="10" y={y + 5}>{label}</text>
            </g>
          ))}
          {lowerTicks.map(([y, label]) => (
            <g key={y}>
              <path d={`M1 ${y}H7`} stroke="#fff" strokeWidth="1.500" />
              <text x="11" y={y + 4}>{label}</text>
            </g>
          ))}
          <rect x="11" y="342" width="62" height="23" rx="4" fill="#8dbf74" />
          <text x="42" y="358" fontSize="15" textAnchor="middle">1413.94</text>
        </Axis>

        <Markup viewBox="0 192 1500 442" preserveAspectRatio="none" fill="none" stroke="#207bea" strokeLinecap="round" strokeLinejoin="round">
          <path strokeWidth="3.200" d="M954 527C952 514 954 508 963 502C972 493 982 492 990 488C1003 482 1010 474 1030 468C1044 463 1050 460 1060 459.500C1074 459 1082 459 1100 453C1120 447 1134 442 1160 441C1190 440.500 1205 438 1220 435C1240 430 1262 426 1280 421C1312 411 1330 401 1350 395C1370 388 1388 381 1395 376C1408 366 1416 355 1425 344C1438 324 1448 298 1454 276C1457 262 1456 256 1460 243" />
          <path strokeWidth="3" d="M1321 293C1319 286 1316 285 1308 285H1284C1276 285 1264 298 1262 309V328C1263 339 1271 344 1280 344.500C1292 345 1300 344 1306 340C1316 333 1323 328 1326 317C1327 306 1330 304 1331 297L1330 287" />
          <path strokeWidth="3" d="M1289 312L1293.500 303C1294.500 314 1294 324 1297.500 334" />
        </Markup>

        <ZoomControl>
          <ZoomButton aria-label="Zoom out">
            <svg width="34" height="34" viewBox="0 0 34 34" display="block" aria-hidden="true">
              <path d="M9 15h16v4H9z" fill="rgba(45,45,45,.4)" stroke="rgba(190,190,190,.4)" />
            </svg>
          </ZoomButton>
          <ZoomRange type="range" aria-label="Zoom level" />
          <ZoomButton aria-label="Zoom in">
            <svg width="34" height="34" viewBox="0 0 34 34" display="block" aria-hidden="true">
              <path d="M14.500 9h5v5.500H25v5h-5.500V25h-5v-5.500H9v-5h5.500z" fill="rgba(45,45,45,.5)" stroke="rgba(190,190,190,.4)" />
            </svg>
          </ZoomButton>
        </ZoomControl>
      </Chart>

      <Nav>
        {navIcons.map(([label, icon]) => (
          <NavItem key={label}>
            {icon ? (
              <>
                <NavIcon viewBox="0 0 64 46" fill="#6d6e71" aria-hidden="true">{icon}</NavIcon>
                {label}
              </>
            ) : (
              <NavSponsor>
                <Infinity8 w={54} h={33} id="ring-nav" />
                <SponsorText $small>ASIA PLUS</SponsorText>
                <Securities>Securities</Securities>
              </NavSponsor>
            )}
          </NavItem>
        ))}
        <NavItem aria-label="Assistant">
          <Assist viewBox="0 0 76 76" fill="none" stroke="#34c3fb" aria-hidden="true">
            <path strokeWidth="7" d="M38 8.500A28.500 28.500 0 1 1 9.500 37" />
            <path strokeWidth="5.500" d="M38 17.500A19.500 19.500 0 1 0 57.500 37" />
            <path strokeWidth="8" d="M47 37A9 9 0 1 0 38 46" />
          </Assist>
        </NavItem>
      </Nav>
    </>
  );
}
